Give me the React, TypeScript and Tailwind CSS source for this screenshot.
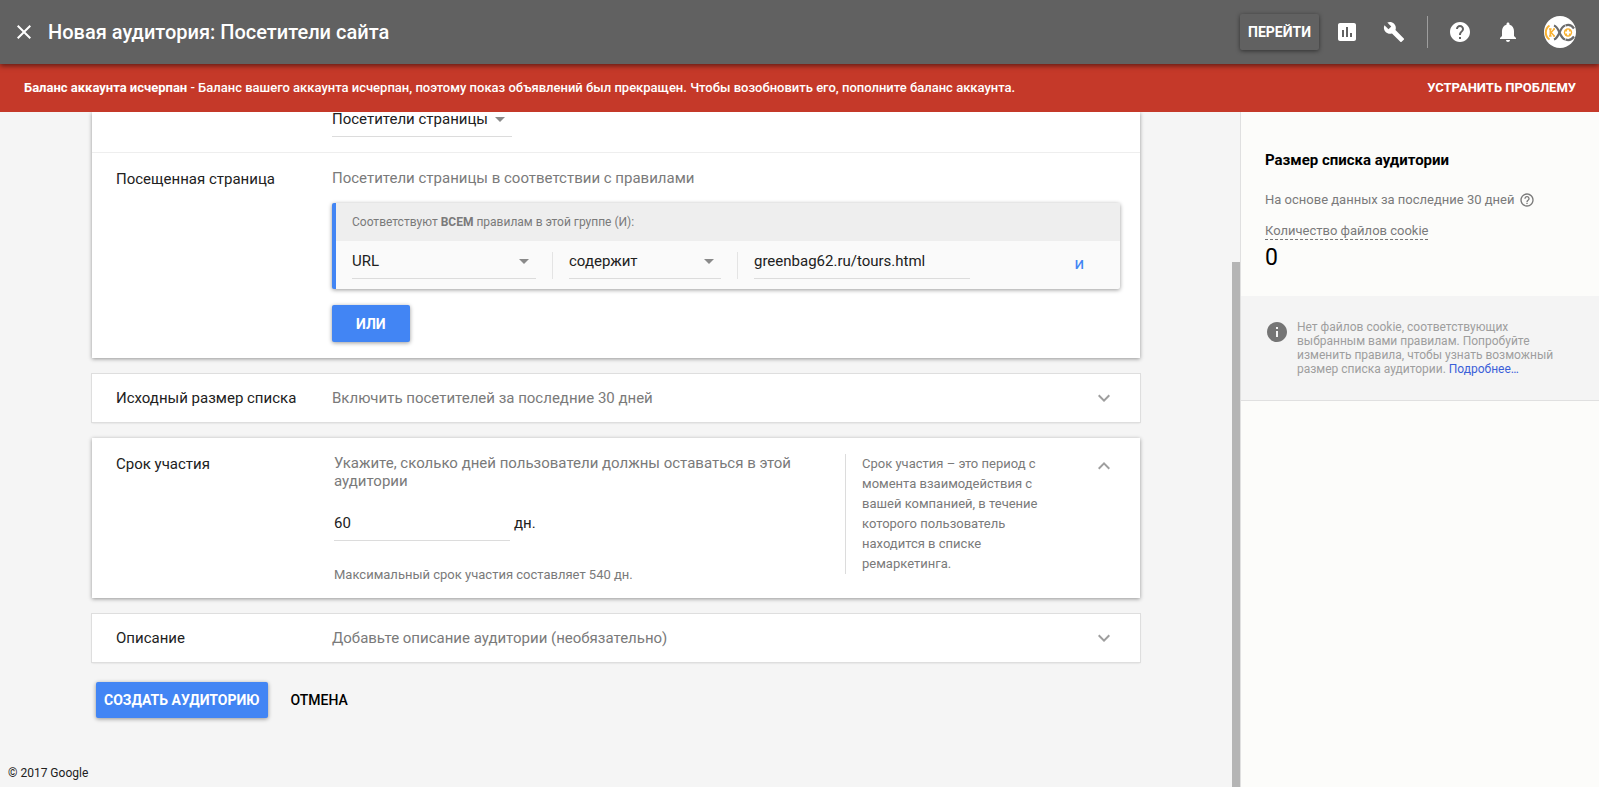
import { useState } from 'react'
import type { ReactNode } from 'react'
import {
  MdAssessment,
  MdBuild,
  MdClose,
  MdExpandLess,
  MdExpandMore,
  MdHelp,
  MdHelpOutline,
  MdInfo,
  MdNotifications,
} from 'react-icons/md'

const raised = 'shadow-[0_1px_4px_rgba(0,0,0,0.4)]'
const card = `bg-white ${raised}`
const label = 'w-[216px] shrink-0 text-[15px] leading-5 text-[#212121]'
const hint = 'text-[15px] leading-[18px] text-[#7a7a7a]'
const field = 'h-[27px] w-full border-b border-[#dcdcdc] bg-transparent pb-2 text-[15px] leading-[18px] text-[#212121] outline-none'

function Dropdown({ name, options, width }: { name: string; options: string[]; width: string }) {
  return (
    <div className={`relative shrink-0 ${width}`}>
      <select aria-label={name} className={`block appearance-none rounded-none ${field}`}>
        {options.map((o) => (
          <option key={o}>{o}</option>
        ))}
      </select>
      <svg className="pointer-events-none absolute top-0 right-1.5 h-[18px] w-3" viewBox="0 0 12 18" fill="#8a8a8a">
        <path d="M1 7h10l-5 5z" />
      </svg>
    </div>
  )
}

function CollapsedCard({ title, children }: { title: string; children: ReactNode }) {
  return (
    <section className="flex h-12 items-center bg-white px-6 shadow-[0_0_0_1px_#dedede,0_1px_2px_rgba(0,0,0,0.15)]">
      <h2 className={label}>{title}</h2>
      <p className={`flex-1 ${hint}`}>{children}</p>
      <button type="button" aria-label="Развернуть" className="text-[#9e9e9e]">
        <MdExpandMore size={24} />
      </button>
    </section>
  )
}

function Avatar() {
  return (
    <svg className="h-8 w-8" viewBox="0 0 32 32" aria-hidden="true">
      <circle cx="16" cy="16" r="16" fill="#fff" />
      <path d="M5.500 9.500Q1.800 12 1.800 16.500T5.500 23.500" fill="none" stroke="#f9b233" strokeWidth="2" />
      <path
        d="M5 13h2.600M5 20h2.600M6.300 13v7M10.300 13L7 16.500l3.300 3.500M9 13h2M9 20h2"
        fill="none"
        stroke="#f9b233"
        strokeWidth="1.600"
      />
      <g fill="none" stroke="#6b6b6b" strokeWidth="2.200">
        <path d="M10 9.500Q13 10.500 15.500 16.500T21 23.500" />
        <path d="M10 23.500Q13 22.500 15.500 16.500T21 9.500" />
        <path d="M21.500 9.500Q26.500 7.500 30 12.500" />
        <path d="M21.500 23.500Q26.500 25.500 30 20.500" />
      </g>
      <circle cx="24" cy="16.500" r="4.200" fill="#f9b233" />
      <path d="M21.200 16.500h5.600M24 13.700v5.600" stroke="#fff" strokeWidth="1.800" />
    </svg>
  )
}

export default function App() {
  const [url, setUrl] = useState('greenbag62.ru/tours.html')
  const [days, setDays] = useState('60')

  return (
    <div className="flex h-screen flex-col bg-[#f5f5f5] font-['Roboto',sans-serif] text-[#212121]">
      {/* Шапка */}
      <header className="z-10 flex h-16 shrink-0 items-center bg-[#616161] pr-[23px] pl-3 text-white shadow-[0_2px_5px_rgba(0,0,0,0.5)]">
        <button type="button" aria-label="Закрыть">
          <MdClose size={24} />
        </button>
        <h1 className="ml-3 flex-1 text-xl font-medium">Новая аудитория: Посетители сайта</h1>
        <button type="button" className="h-9 rounded-xs px-2 text-sm font-bold shadow-[0_1px_4px_rgba(0,0,0,0.5)]">
          ПЕРЕЙТИ
        </button>
        <button type="button" aria-label="Отчеты" className="ml-4">
          <MdAssessment size={24} />
        </button>
        <button type="button" aria-label="Инструменты" className="ml-6">
          <MdBuild size={22} />
        </button>
        <div className="ml-[22px] h-8 w-px bg-[#9e9e9e]" />
        <button type="button" aria-label="Справка" className="ml-5">
          <MdHelp size={24} />
        </button>
        <button type="button" aria-label="Уведомления" className="ml-6">
          <MdNotifications size={24} />
        </button>
        <button type="button" aria-label="Аккаунт" className="ml-6">
          <Avatar />
        </button>
      </header>

      <div className="flex h-12 shrink-0 items-center justify-between bg-[#c53929] pr-[23px] pl-6 text-[13px] font-medium text-white">
        <p>
          <b className="font-bold">Баланс аккаунта исчерпан</b> - Баланс вашего аккаунта исчерпан, поэтому показ объявлений был
          прекращен. Чтобы возобновить его, пополните баланс аккаунта.
        </p>
        <button type="button" className="font-bold">УСТРАНИТЬ ПРОБЛЕМУ</button>
      </div>

      <div className="flex min-h-0 flex-1">
        <main className="flex min-w-0 flex-1 flex-col overflow-hidden">
          <form className="flex flex-col gap-4 px-[92px]" onSubmit={(e) => e.preventDefault()}>
            <section className={card}>
              <div className="flex h-[41px] items-end border-b border-[#eee] pr-5 pb-[15px] pl-6">
                <div className={label} />
                <Dropdown name="Участники списка" options={['Посетители страницы']} width="w-[180px]" />
              </div>
              <div className="flex py-4 pr-5 pl-6">
                <h2 className={label}>Посещенная страница</h2>
                <div className="min-w-0 flex-1">
                  <p className={hint}>Посетители страницы в соответствии с правилами</p>
                  <div className={`mt-4 rounded-xs border-l-4 border-[#4285f4] bg-[#fafafa] ${raised}`}>
                    <p className="flex h-[38px] items-center bg-[#eee] px-4 text-xs text-[#7a7a7a]">
                      <span>
                        Соответствуют <b className="font-bold">ВСЕМ</b> правилам в этой группе (И):
                      </span>
                    </p>
                    <div className="flex h-12 items-center gap-4 px-4">
                      <Dropdown name="Параметр" options={['URL']} width="w-[184px]" />
                      <div className="h-[27px] w-px bg-[#e4e4e4]" />
                      <Dropdown name="Условие" options={['содержит']} width="w-[152px]" />
                      <div className="h-[27px] w-px bg-[#e4e4e4]" />
                      <div className="w-[216px]">
                        <input aria-label="Адрес" className={`block ${field}`} value={url} onChange={(e) => setUrl(e.target.value)} />
                      </div>
                      <button type="button" className="mr-5 ml-auto text-[13px] font-medium text-[#4285f4]">
                        И
                      </button>
                    </div>
                  </div>
                  <button type="button" className={`mt-4 block h-[37px] rounded-xs bg-[#4285f4] px-6 text-sm font-bold text-white ${raised}`}>
                    ИЛИ
                  </button>
                </div>
              </div>
            </section>

            <CollapsedCard title="Исходный размер списка">Включить посетителей за последние 30 дней</CollapsedCard>

            <section className={`flex px-6 pt-4 pb-[13px] ${card}`}>
              <h2 className={label}>Срок участия</h2>
              <div className="min-w-0 flex-1 pr-10 pl-0.5">
                <p className={hint}>Укажите, сколько дней пользователи должны оставаться в этой аудитории</p>
                <div className="mt-6 flex gap-1">
                  <div className="w-44">
                    <input id="days" className={`block ${field}`} value={days} onChange={(e) => setDays(e.target.value)} />
                  </div>
                  <label htmlFor="days" className="text-[15px] leading-[18px]">дн.</label>
                </div>
                <p className="mt-6 text-[13px] leading-5 text-[#7a7a7a]">Максимальный срок участия составляет 540 дн.</p>
              </div>
              <p className="mr-8 w-[215px] shrink-0 self-start border-l border-[#dcdcdc] pr-5 pl-4 text-[13px] leading-5 text-[#7a7a7a]">
                Срок участия – это период с момента взаимодействия с вашей компанией, в течение которого пользователь находится в
                списке ремаркетинга.
              </p>
              <button type="button" aria-label="Свернуть" className="self-start text-[#9e9e9e]">
                <MdExpandLess size={24} />
              </button>
            </section>

            <CollapsedCard title="Описание">Добавьте описание аудитории (необязательно)</CollapsedCard>

            <div className="flex items-center gap-[23px] px-1 pt-1 text-sm font-medium">
              <button type="submit" className={`h-9 rounded-xs bg-[#4285f4] px-2 font-bold text-white ${raised}`}>
                СОЗДАТЬ АУДИТОРИЮ
              </button>
              <button type="button" className="text-black">
                ОТМЕНА
              </button>
            </div>
          </form>
          <footer className="mt-auto px-2 pb-1.5 text-xs">© 2017 Google</footer>
        </main>

        {/* Полоса прокрутки */}
        <div className="flex w-2 shrink-0 flex-col justify-end">
          <div className="h-7/9 bg-[#b5b5b5]" />
        </div>

        <aside className="w-[359px] shrink-0 border-l border-[#e0e0e0] bg-[#fcfcfa]">
          <div className="h-[184px] px-6 pt-[38px]">
            <h2 className="text-[15px] leading-5 font-bold text-black">Размер списка аудитории</h2>
            <p className="mt-5 flex items-center gap-1 text-[13px] leading-5 text-[#7a7a7a]">
              На основе данных за последние 30 дней
              <MdHelpOutline size={16} />
            </p>
            <p className="mt-3 leading-4">
              <span className="inline-block border-b border-dashed border-[#757575] text-[13px] leading-4 text-[#7a7a7a]">
                Количество файлов cookie
              </span>
            </p>
            <p className="mt-1 text-[23px] leading-7 text-black">0</p>
          </div>
          <div className="flex gap-2 border-b border-[#e0e0e0] bg-[#f4f4f4] px-6 py-6">
            <MdInfo size={24} className="shrink-0 text-[#757575]" />
            <p className="text-xs leading-[14px] text-[#9e9e9e]">
              Нет файлов cookie, соответствующих выбранным вами правилам. Попробуйте изменить правила, чтобы узнать возможный размер
              списка аудитории.{' '}
              <a href="#" className="inline-block text-[#3b5fd9]">
                Подробнее…
              </a>
            </p>
          </div>
        </aside>
      </div>
    </div>
  )
}
